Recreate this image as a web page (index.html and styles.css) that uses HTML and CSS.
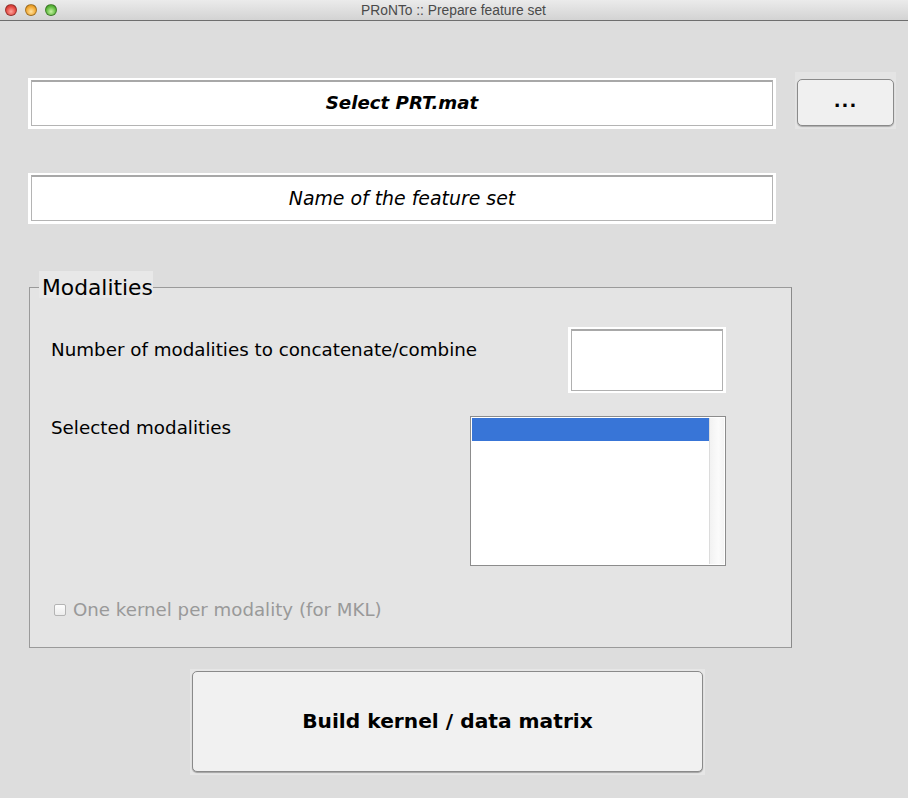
FILE: index.html
```html
<!DOCTYPE html>
<html>
<head>
<meta charset="utf-8">
<link rel="stylesheet" href="styles.css">
</head>
<body>
<div class="titlebar">
  <div class="lights">
    <span class="light red"></span>
    <span class="light yellow"></span>
    <span class="light green"></span>
  </div>
  <div class="title">PRoNTo :: Prepare feature set</div>
</div>
<div class="content">
  <div class="row1">
    <div class="field"><div class="field-inner bold">Select PRT.mat</div></div>
    <div class="btn-wrap"><button class="dots">...</button></div>
  </div>
  <div class="field name"><div class="field-inner">Name of the feature set</div></div>

  <div class="group">
    <div class="legend">Modalities</div>
    <div class="panel">
      <div class="label l1">Number of modalities to concatenate/combine</div>
      <div class="numbox"><div class="numbox-inner"></div></div>
      <div class="label l2">Selected modalities</div>
      <div class="listbox">
        <div class="list-items"><div class="sel"></div></div>
        <div class="scroll"></div>
      </div>
      <div class="check"><span class="cb"></span><span>One kernel per modality (for MKL)</span></div>
    </div>
  </div>

  <div class="build-wrap"><button class="build">Build kernel / data matrix</button></div>
</div>
</body>
</html>
```

FILE: styles.css
```css
* { box-sizing: border-box; }
html, body { margin: 0; padding: 0; }
body {
  width: 908px;
  height: 798px;
  background: #dddddd;
  font-family: "DejaVu Sans", sans-serif;
  overflow: hidden;
}
.titlebar {
  height: 21px;
  background: linear-gradient(#ebebeb, #d3d3d3);
  border-bottom: 1px solid #6e6e6e;
  display: flex;
  align-items: center;
}
.lights {
  display: flex;
  gap: 8px;
  padding-left: 5px;
}
.light {
  width: 12px;
  height: 12px;
  border-radius: 50%;
  display: block;
  border: 1px solid rgba(0,0,0,0.3);
}
.red { background: radial-gradient(circle at 50% 65%, #ffa49c, #e2463f 60%, #b0302a); }
.yellow { background: radial-gradient(circle at 50% 65%, #ffe3a0, #f0a630 60%, #c27d14); }
.green { background: radial-gradient(circle at 50% 65%, #c6f3a3, #5cb83c 60%, #3a8a22); }
.title {
  flex: 1;
  text-align: center;
  font-family: "Liberation Sans", sans-serif;
  font-size: 13.8px;
  color: #4a4a4a;
  margin-right: 58px;
  padding-top: 1px;
}
.content {
  padding: 51px 0 0 28px;
}
.row1 {
  display: flex;
  align-items: flex-end;
}
.field {
  width: 748px;
  height: 51px;
  background: #ffffff;
  padding: 2px 3px 3px 3px;
}
.field-inner {
  height: 100%;
  border: 1px solid #b4b4b4;
  border-top: 2px solid #a8a8a8;
  display: flex;
  align-items: center;
  justify-content: center;
  font-style: italic;
  font-size: 18.9px;
  color: #000;
  padding-bottom: 2px;
}
.field-inner.bold { font-weight: bold; font-size: 18.2px; }
.btn-wrap {
  margin-left: 19px;
  width: 101px;
  height: 57px;
  background: #e4e4e4;
  padding: 7px 2px 3px 2px;
}
.dots {
  width: 97px;
  height: 47px;
  border: 1px solid #8a8a8a;
  border-radius: 5px;
  background: #f0f0f0;
  box-shadow: 0 1px 1px rgba(0,0,0,0.25);
  font-family: "DejaVu Sans", sans-serif;
  font-weight: bold;
  font-size: 18px;
  letter-spacing: 1px;
  padding: 0 0 4px 0;
  color: #000;
}
.field.name { margin-top: 44px; }
.group {
  margin-top: 47px;
  width: 763px;
  margin-left: 1px;
}
.legend {
  width: 114px;
  height: 27px;
  margin-left: 10px;
  background: #e8e8e8;
  font-size: 21.8px;
  line-height: 24px;
  padding: 5px 0 0 3px;
  margin-bottom: -11px;
  position: relative;
  z-index: 1;
  color: #000;
  white-space: nowrap;
}
.panel {
  height: 361px;
  background: #e4e4e4;
  border: 1px solid #9a9a9a;
  border-right-color: #8a8a8a;
  display: grid;
  grid-template-columns: minmax(0, 1fr) auto;
  grid-template-rows: 66px 150px auto;
  align-content: start;
  row-gap: 23px;
  padding: 39px 65px 0 21px;
}
.label {
  font-size: 18.3px;
  line-height: 20px;
  color: #000;
  white-space: nowrap;
}
.l1 { padding-top: 13px; }
.l2 { padding-top: 2px; }
.numbox {
  justify-self: end;
  width: 158px;
  height: 66px;
  background: #ffffff;
  padding: 2px 3px;
}
.numbox-inner {
  height: 100%;
  border: 1px solid #b0b0b0;
  border-top: 2px solid #a8a8a8;
}
.listbox {
  justify-self: end;
  width: 256px;
  height: 150px;
  background: #ffffff;
  border: 1px solid #8c8c8c;
  display: flex;
  padding: 1px;
}
.list-items { flex: 1; }
.sel {
  height: 23px;
  background: #3875d7;
}
.scroll {
  width: 15px;
  border-left: 1px solid #dcdcdc;
  background: linear-gradient(90deg, #f2f2f2, #fbfbfb 60%, #f4f4f4);
}
.check {
  grid-column: 1 / 3;
  display: flex;
  align-items: center;
  gap: 7px;
  margin-top: 11px;
  padding-left: 3px;
  font-size: 18.2px;
  line-height: 20px;
  color: #999999;
  white-space: nowrap;
}
.cb {
  width: 12px;
  height: 12px;
  border: 1px solid #b4b4b4;
  border-radius: 2px;
  background: linear-gradient(#fdfdfd, #ececec);
  display: block;
}
.build-wrap {
  margin-top: 21px;
  margin-left: 162px;
  width: 515px;
  height: 106px;
  background: #e6e6e6;
  padding: 2px;
}
.build {
  width: 511px;
  height: 101px;
  border: 1px solid #8a8a8a;
  border-radius: 5px;
  background: #f1f1f1;
  box-shadow: 0 1px 1px rgba(0,0,0,0.3);
  font-family: "DejaVu Sans", sans-serif;
  font-weight: bold;
  font-size: 20.2px;
  color: #000;
  padding: 0 0 2px 0;
}
```
